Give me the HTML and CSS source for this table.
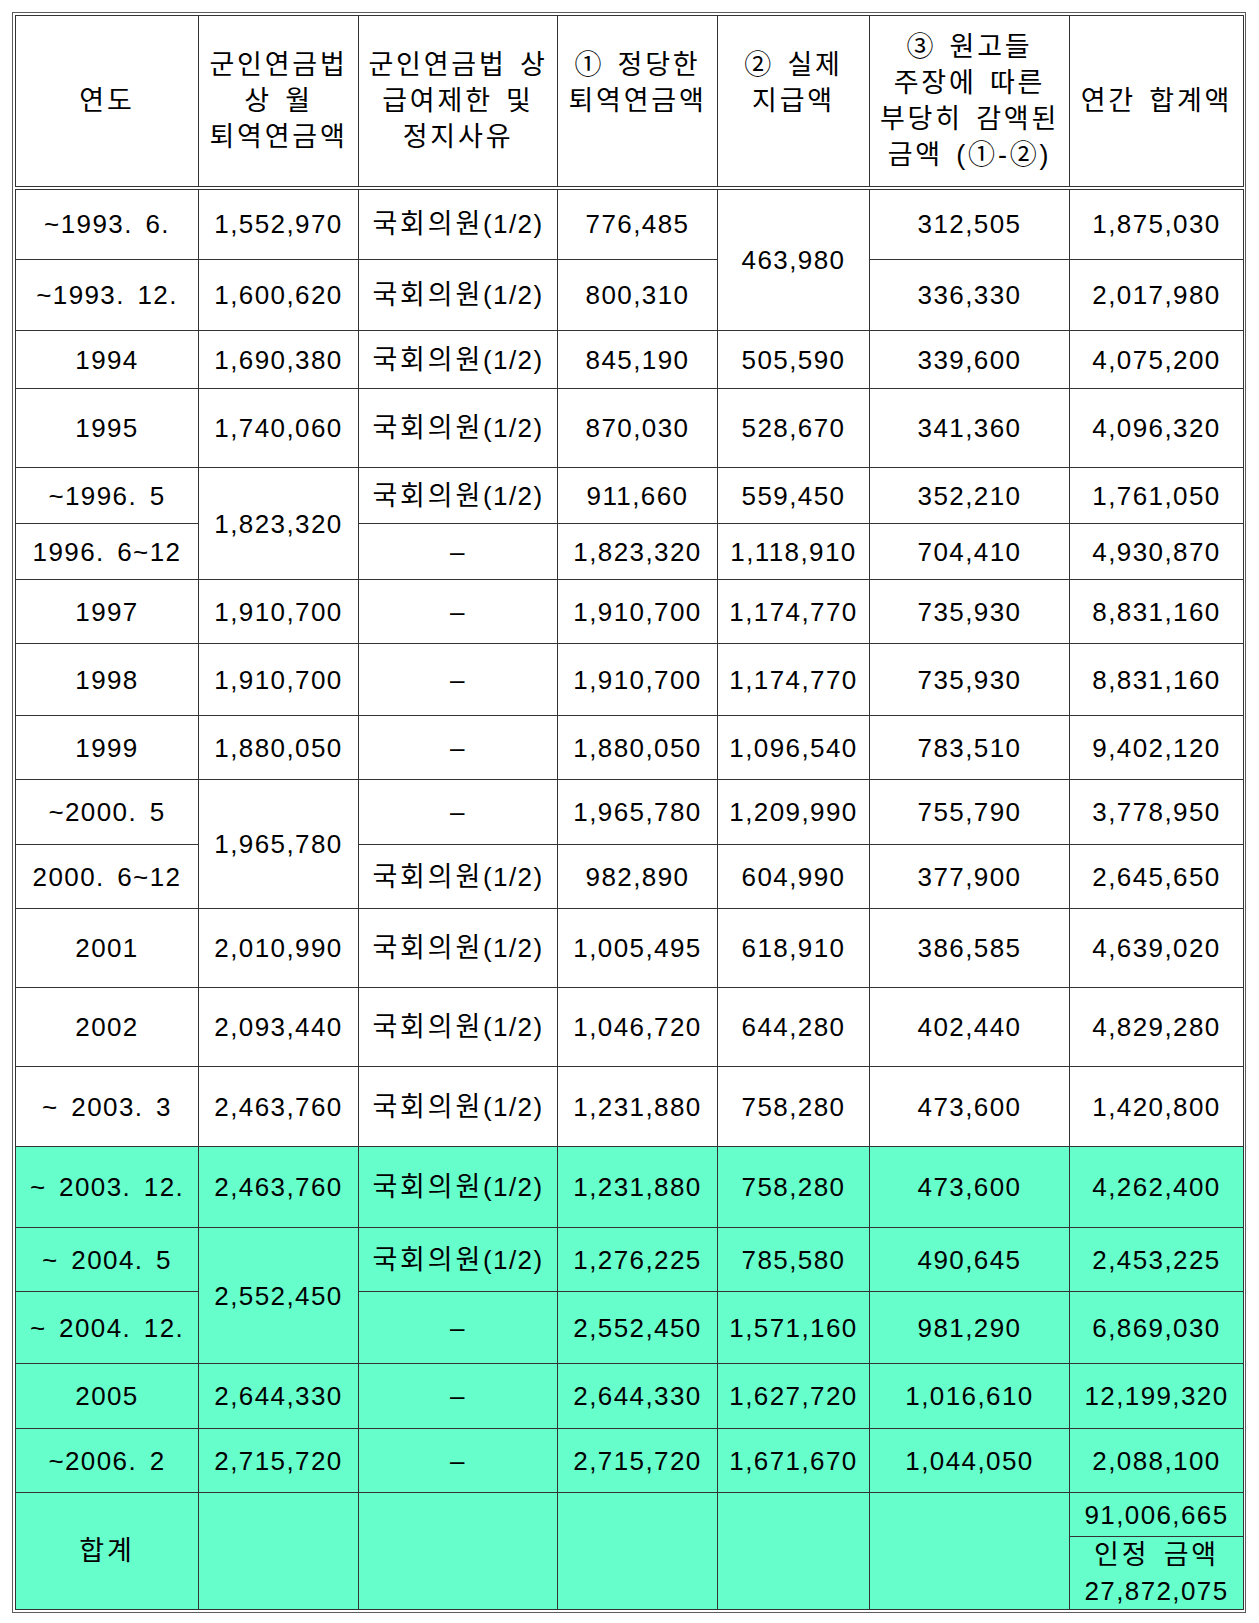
FILE: index.html
```html
<!DOCTYPE html>
<html lang="ko">
<head>
<meta charset="utf-8">
<title>군인연금 퇴역연금액 표</title>
<link rel="stylesheet" href="styles.css">
</head>
<body>
<div class="frame">
<table class="pension">
<colgroup>
<col class="c1"><col class="c2"><col class="c3"><col class="c4"><col class="c5"><col class="c6"><col class="c7">
</colgroup>
<thead>
<tr class="head">
<th>연도</th>
<th>군인연금법<br>상 월<br>퇴역연금액</th>
<th>군인연금법 상<br>급여제한 및<br>정지사유</th>
<th class="raise">① 정당한<br>퇴역연금액</th>
<th class="raise">② 실제<br>지급액</th>
<th>③ 원고들<br>주장에 따른<br>부당히 감액된<br>금액 (①-②)</th>
<th>연간 합계액</th>
</tr>
</thead>
<tbody>
<tr class="h72">
<td>~1993. 6.</td><td>1,552,970</td><td><span class="ko">국회의원</span>(1/2)</td><td>776,485</td><td rowspan="2">463,980</td><td>312,505</td><td>1,875,030</td>
</tr>
<tr class="h71">
<td>~1993. 12.</td><td>1,600,620</td><td><span class="ko">국회의원</span>(1/2)</td><td>800,310</td><td>336,330</td><td>2,017,980</td>
</tr>
<tr class="h58">
<td>1994</td><td>1,690,380</td><td><span class="ko">국회의원</span>(1/2)</td><td>845,190</td><td>505,590</td><td>339,600</td><td>4,075,200</td>
</tr>
<tr class="h79">
<td>1995</td><td>1,740,060</td><td><span class="ko">국회의원</span>(1/2)</td><td>870,030</td><td>528,670</td><td>341,360</td><td>4,096,320</td>
</tr>
<tr class="h56">
<td>~1996. 5</td><td rowspan="2">1,823,320</td><td><span class="ko">국회의원</span>(1/2)</td><td>911,660</td><td>559,450</td><td>352,210</td><td>1,761,050</td>
</tr>
<tr class="h56">
<td>1996. 6~12</td><td>–</td><td>1,823,320</td><td>1,118,910</td><td>704,410</td><td>4,930,870</td>
</tr>
<tr class="h64">
<td>1997</td><td>1,910,700</td><td>–</td><td>1,910,700</td><td>1,174,770</td><td>735,930</td><td>8,831,160</td>
</tr>
<tr class="h72">
<td>1998</td><td>1,910,700</td><td>–</td><td>1,910,700</td><td>1,174,770</td><td>735,930</td><td>8,831,160</td>
</tr>
<tr class="h64">
<td>1999</td><td>1,880,050</td><td>–</td><td>1,880,050</td><td>1,096,540</td><td>783,510</td><td>9,402,120</td>
</tr>
<tr class="h65">
<td>~2000. 5</td><td rowspan="2">1,965,780</td><td>–</td><td>1,965,780</td><td>1,209,990</td><td>755,790</td><td>3,778,950</td>
</tr>
<tr class="h64">
<td>2000. 6~12</td><td><span class="ko">국회의원</span>(1/2)</td><td>982,890</td><td>604,990</td><td>377,900</td><td>2,645,650</td>
</tr>
<tr class="h79">
<td>2001</td><td>2,010,990</td><td><span class="ko">국회의원</span>(1/2)</td><td>1,005,495</td><td>618,910</td><td>386,585</td><td>4,639,020</td>
</tr>
<tr class="h79">
<td>2002</td><td>2,093,440</td><td><span class="ko">국회의원</span>(1/2)</td><td>1,046,720</td><td>644,280</td><td>402,440</td><td>4,829,280</td>
</tr>
<tr class="h80">
<td>~ 2003. 3</td><td>2,463,760</td><td><span class="ko">국회의원</span>(1/2)</td><td>1,231,880</td><td>758,280</td><td>473,600</td><td>1,420,800</td>
</tr>
<tr class="h81 hl">
<td>~ 2003. 12.</td><td>2,463,760</td><td><span class="ko">국회의원</span>(1/2)</td><td>1,231,880</td><td>758,280</td><td>473,600</td><td>4,262,400</td>
</tr>
<tr class="h64 hl">
<td>~ 2004. 5</td><td rowspan="2">2,552,450</td><td><span class="ko">국회의원</span>(1/2)</td><td>1,276,225</td><td>785,580</td><td>490,645</td><td>2,453,225</td>
</tr>
<tr class="h72 hl">
<td>~ 2004. 12.</td><td>–</td><td>2,552,450</td><td>1,571,160</td><td>981,290</td><td>6,869,030</td>
</tr>
<tr class="h65 hl">
<td>2005</td><td>2,644,330</td><td>–</td><td>2,644,330</td><td>1,627,720</td><td>1,016,610</td><td>12,199,320</td>
</tr>
<tr class="h64 hl">
<td>~2006. 2</td><td>2,715,720</td><td>–</td><td>2,715,720</td><td>1,671,670</td><td>1,044,050</td><td>2,088,100</td>
</tr>
<tr class="h44 hl">
<td rowspan="2"><span class="ko">합계</span></td><td rowspan="2"></td><td rowspan="2"></td><td rowspan="2"></td><td rowspan="2"></td><td rowspan="2"></td><td>91,006,665</td>
</tr>
<tr class="h70 hl">
<td><span class="ko">인정 금액</span><br>27,872,075</td>
</tr>
</tbody>
</table>
</div>
</body>
</html>
```

FILE: styles.css
```css
body {
  margin: 0;
  background: #ffffff;
}

.frame {
  margin: 12px;
  width: 1228px;
  border: 1px solid #5c5c5c;
  padding: 2px;
}

.pension {
  width: 1228px;
  border-collapse: collapse;
  table-layout: fixed;
  font-family: "Liberation Sans", "Noto Sans CJK KR", sans-serif;
  font-size: 26px;
  line-height: 36px;
  letter-spacing: 1.4px;
  word-spacing: 4px;
  color: #000000;
}

.c1 { width: 183px; }
.c2 { width: 160px; }
.c3 { width: 199px; }
.c4 { width: 160px; }
.c5 { width: 152px; }
.c6 { width: 200px; }
.c7 { width: 174px; }

.pension th,
.pension td {
  border: 1px solid #333333;
  padding: 0;
  text-align: center;
  vertical-align: middle;
  font-weight: normal;
  white-space: nowrap;
}

.pension th {
  font-size: 27px;
  letter-spacing: 2.8px;
  word-spacing: 3px;
}

.ko {
  font-size: 27px;
  letter-spacing: 2.8px;
}

.pension .head th {
  border-bottom: 4px double #333333;
}

.pension .head th.raise {
  padding-bottom: 36px;
}

.head { height: 172px; }
.h44 { height: 44px; }
.h56 { height: 56px; }
.h58 { height: 58px; }
.h64 { height: 64px; }
.h65 { height: 65px; }
.h70 { height: 70px; }
.h71 { height: 71px; }
.h72 { height: 72px; }
.h79 { height: 79px; }
.h80 { height: 80px; }
.h81 { height: 81px; }

.hl td {
  background: #66ffcc;
}
```
